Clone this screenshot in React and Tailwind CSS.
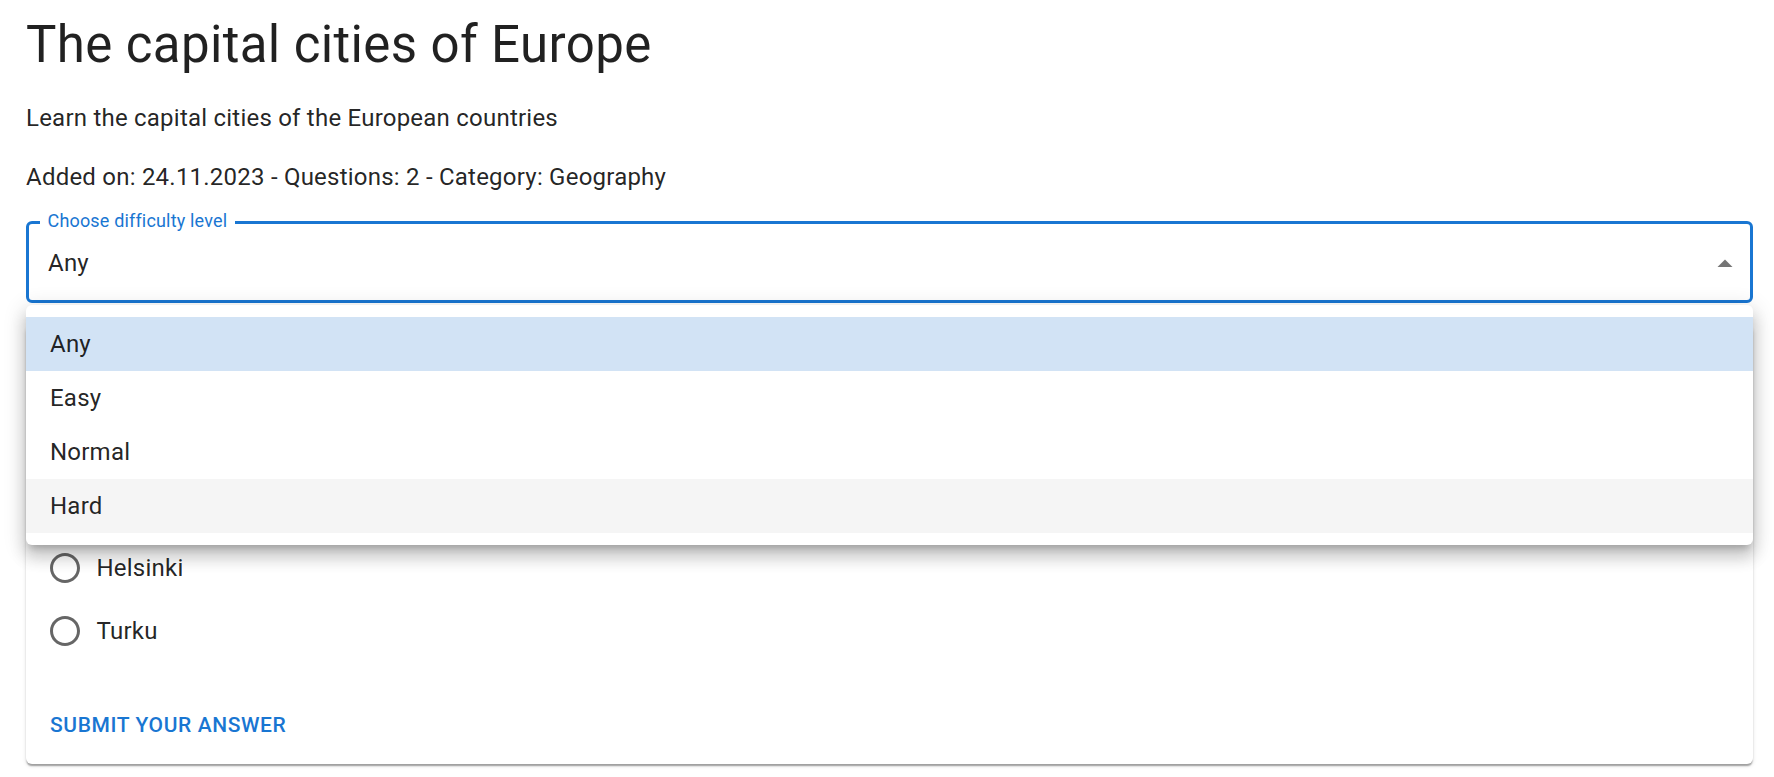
import React from "react";

function RadioIcon() {
  return (
    <svg width="36" height="36" viewBox="0 0 24 24" className="block">
      <path
        fill="rgba(0,0,0,0.6)"
        d="M12 2C6.48 2 2 6.48 2 12s4.48 10 10 10 10-4.48 10-10S17.52 2 12 2zm0 18c-4.42 0-8-3.58-8-8s3.58-8 8-8 8 3.58 8 8-3.58 8-8 8z"
      />
    </svg>
  );
}

function RadioRow({ label }) {
  return (
    <label className="flex items-center h-[63px] ml-[-16.5px] cursor-pointer">
      <span className="p-[13.5px] flex">
        <RadioIcon />
      </span>
      <span className="text-[24px] leading-[36px] tracking-[0.00938em] text-[rgba(0,0,0,0.87)]">
        {label}
      </span>
    </label>
  );
}

export default function App() {
  const options = ["Any", "Easy", "Normal", "Hard"];
  return (
    <div className="min-h-[777px] bg-white font-['Roboto',sans-serif] pl-[26px] pr-[21px] pt-[13px] text-[rgba(0,0,0,0.87)]">
      <h1 className="text-[51px] leading-[63px] font-normal tracking-[0.00735em] mb-[24px]">
        The capital cities of Europe
      </h1>
      <p className="text-[24px] leading-[36px] tracking-[0.00938em] mb-[23px]">
        Learn the capital cities of the European countries
      </p>
      <p className="text-[24px] leading-[36px] tracking-[0.00938em] mb-[26px]">
        Added on: 24.11.2023 - Questions: 2 - Category: Geography
      </p>

      <div className="relative">
        <div className="relative h-[82px] border-[3px] border-[#1976d2] rounded-[6px] flex items-center pt-[3px] pl-[19px] pr-[7.5px]">
          <span className="absolute left-[11px] top-[-12.5px] bg-white px-[7.5px] text-[18px] leading-[18px] text-[#1976d2] tracking-[0.00938em] whitespace-nowrap">
            Choose difficulty level
          </span>
          <span className="flex-1 text-[24px] leading-[34.5px] tracking-[0.00938em]">
            Any
          </span>
          <svg width="36" height="36" viewBox="0 0 24 24" className="block">
            <path fill="rgba(0,0,0,0.54)" d="M7 14l5-5 5 5z" />
          </svg>
        </div>

        <div className="absolute left-0 right-0 top-[calc(100%+2px)] z-10 bg-white rounded-[6px] py-[12px] shadow-[0_7.5px_7.5px_-4.5px_rgba(0,0,0,0.2),0_12px_15px_1.5px_rgba(0,0,0,0.14),0_4.5px_21px_3px_rgba(0,0,0,0.12)]">
          {options.map((o, i) => (
            <div
              key={o}
              className={
                "h-[54px] px-[24px] flex items-center text-[24px] leading-[36px] tracking-[0.00938em] " +
                (i === 0 ? "bg-[#d2e3f5]" : i === 3 ? "bg-[#f5f5f5]" : "bg-white")
              }
            >
              {o}
            </div>
          ))}
        </div>
      </div>

      <div className="mt-[24px] bg-white rounded-[6px] shadow-[0_3px_1.5px_-1.5px_rgba(0,0,0,0.2),0_1.5px_1.5px_0_rgba(0,0,0,0.14),0_1.5px_4.5px_0_rgba(0,0,0,0.12)]">
        <div className="px-[24px] pt-[24px] pb-[24px]">
          {/* area covered by the open menu */}
          <div className="h-[185px]" />
          <div className="flex flex-col">
            <RadioRow label="Helsinki" />
            <RadioRow label="Turku" />
          </div>
        </div>
        <div className="p-[12px]">
          <button className="h-[54px] px-[12px] rounded-[6px] text-[21px] leading-[36.75px] font-medium uppercase tracking-[0.02857em] text-[#1976d2]">
            Submit your answer
          </button>
        </div>
      </div>
    </div>
  );
}
